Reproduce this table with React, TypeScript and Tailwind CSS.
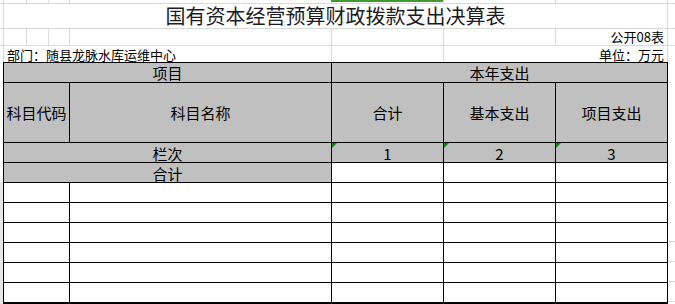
const font = { fontFamily: '"Noto Sans CJK SC", "Liberation Sans", sans-serif' };

// spreadsheet gridline x positions above the table: 3, 26, 48, 69, 331, 443, 555, 667
const GridCell = ({ w, children, className = '' }: { w: string; children?: React.ReactNode; className?: string }) => (
  <div className={`${w} shrink-0 border-l border-[#d9d9d9] ${className}`}>{children}</div>
);

const Tri = () => (
  <span className="absolute top-0 left-0 w-0 h-0 border-t-[5px] border-t-[#008a00] border-r-[5px] border-r-transparent" />
);

const App = () => {
  const dataRows = [0, 1, 2, 3, 4, 5];

  return (
    <div className="w-[675px] h-[304px] overflow-hidden bg-white text-black" style={font}>
      {/* row above title */}
      <div className="flex h-[4px] border-b border-[#d9d9d9]">
        <div className="w-[3px] shrink-0" />
        <GridCell w="w-[23px]" />
        <GridCell w="w-[22px]" />
        <GridCell w="w-[21px]" />
        <GridCell w="w-[262px]" />
        <GridCell w="w-[112px]">
          <div className="h-[2px] bg-[#3f9a2f] -ml-px" />
        </GridCell>
        <GridCell w="w-[112px]" />
        <GridCell w="w-[112px]" />
        <GridCell w="w-[8px]" />
      </div>

      {/* title */}
      <div className="flex h-[25px] border-b border-[#d9d9d9]">
        <div className="w-[3px] shrink-0" />
        <GridCell w="w-[664px]" className="flex items-end justify-center">
          <span className="text-[20px] leading-[20px] pb-[2px] text-[#1c1c24] tracking-[0px]">
            国有资本经营预算财政拨款支出决算表
          </span>
        </GridCell>
        <GridCell w="w-[8px]" />
      </div>

      {/* 公开08表 */}
      <div className="flex h-[17px] border-b border-[#d9d9d9]">
        <div className="w-[3px] shrink-0" />
        <GridCell w="w-[23px]" />
        <GridCell w="w-[22px]" />
        <GridCell w="w-[21px]" />
        <GridCell w="w-[262px]" />
        <GridCell w="w-[112px]" />
        <GridCell w="w-[112px]" />
        <GridCell w="w-[112px]" className="flex items-end justify-end pr-[3px]">
          <span className="text-[13px] leading-[14px] pb-px">公开08表</span>
        </GridCell>
        <GridCell w="w-[8px]" />
      </div>

      {/* 部门 / 单位 */}
      <div className="flex h-[16px]">
        <div className="w-[3px] shrink-0" />
        <GridCell w="w-[328px]" className="flex items-end pl-[3px]">
          <span className="text-[13px] leading-[14px] whitespace-nowrap">部门：随县龙脉水库运维中心</span>
        </GridCell>
        <GridCell w="w-[112px]" />
        <GridCell w="w-[224px]" className="flex items-end justify-end pr-[3px]">
          <span className="text-[13px] leading-[14px]">单位：万元</span>
        </GridCell>
        <GridCell w="w-[8px]" />
      </div>

      {/* table */}
      <div className="flex">
        <div className="w-[3px] shrink-0 flex flex-col">
          <div className="h-[120px]" />
          <div className="flex-1 bg-[#e6e6e6]" />
        </div>

        <div className="grid grid-cols-[65px_261px_111px_111px_111px] grid-rows-[19px_59px_19px_19px_19px_19px_19px_19px_19px_19px] gap-px bg-black border border-black text-[15px] leading-[15px]">
          <div className="col-span-2 bg-[#c0c0c0] flex items-center justify-center">项目</div>
          <div className="col-span-3 bg-[#c0c0c0] flex items-center justify-center">本年支出</div>

          <div className="bg-[#c0c0c0] flex items-center justify-center whitespace-nowrap">科目代码</div>
          <div className="bg-[#c0c0c0] flex items-center justify-center">科目名称</div>
          <div className="bg-[#c0c0c0] flex items-center justify-center">合计</div>
          <div className="bg-[#c0c0c0] flex items-center justify-center">基本支出</div>
          <div className="bg-[#c0c0c0] flex items-center justify-center">项目支出</div>

          <div className="col-span-2 bg-[#c0c0c0] flex items-center justify-center pt-[2px]">栏次</div>
          <div className="relative bg-[#c0c0c0] flex items-center justify-center pt-[2px]">
            <Tri />1
          </div>
          <div className="relative bg-[#c0c0c0] flex items-center justify-center pt-[2px]">
            <Tri />2
          </div>
          <div className="relative bg-[#c0c0c0] flex items-center justify-center pt-[2px]">
            <Tri />3
          </div>

          <div className="col-span-2 bg-[#c0c0c0] flex items-center justify-center pt-[2px]">合计</div>
          <div className="bg-white" />
          <div className="bg-white" />
          <div className="bg-white" />

          {dataRows.map((r) => (
            <div key={r} className="contents">
              <div className="bg-white" />
              <div className="bg-white" />
              <div className="bg-white" />
              <div className="bg-white" />
              <div className="bg-white" />
            </div>
          ))}
        </div>

        <div className="w-[8px] shrink-0 flex flex-col">
          <div className="h-[160px]" />
          {dataRows.map((r) => (
            <div key={r} className="h-[20px] border-b border-[#d9d9d9]" />
          ))}
        </div>
      </div>
    </div>
  );
};

export default App;
